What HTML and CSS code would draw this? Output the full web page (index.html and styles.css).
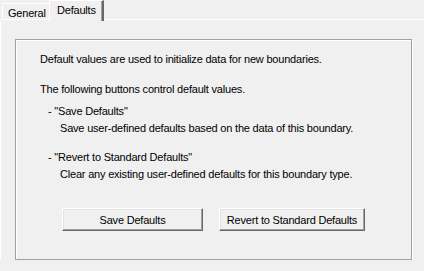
FILE: index.html
```html
<!DOCTYPE html>
<html lang="en">
<head>
    <meta charset="UTF-8">
    <title>Boundary Properties - Defaults</title>
    <link rel="stylesheet" href="styles.css">
</head>
<body>

    <div class="tab-strip">
        <div class="tab">General</div>
        <div class="tab active">Defaults</div>
        <div class="tab-fill"></div>
    </div>

    <div class="tab-page">
        <div class="group">
            <p class="line intro">Default values are used to initialize data for new boundaries.</p>
            <p class="line lead">The following buttons control default values.</p>

            <div class="item">
                <p class="line">- "Save Defaults"</p>
                <p class="line desc">Save user-defined defaults based on the data of this boundary.</p>
            </div>
            <div class="item">
                <p class="line">- "Revert to Standard Defaults"</p>
                <p class="line desc">Clear any existing user-defined defaults for this boundary type.</p>
            </div>

            <div class="buttons">
                <button class="win-btn save">Save Defaults</button>
                <button class="win-btn revert">Revert to Standard Defaults</button>
            </div>
        </div>
    </div>

</body>
</html>
```

FILE: styles.css
```css
/* Classic dialog look */
body {
    margin: 0;
    background-color: #f0f0f0;
    font-family: 'Liberation Sans', Arial, sans-serif;
    font-size: 11px;
    letter-spacing: -0.2px;
    color: #000;
}

/* --- Tabs --- */
.tab-strip {
    display: flex;
    align-items: flex-end;
    height: 20px;
    padding-left: 2px;
}

.tab {
    box-sizing: border-box;
    height: 17px;
    width: 48px;
    padding: 2px 0 0 5px;
    border-top: 1px solid #fff;
    border-left: 1px solid #fff;
    border-right: 1px solid #a0a0a0;
    border-bottom: 1px solid #fff;
    line-height: 14px;
}

.tab.active {
    height: 21px;
    width: 55px;
    margin-left: -1px;
    margin-bottom: -1px;
    padding: 2px 0 0 7px;
    border-bottom: none;
    border-right: 2px solid #696969;
    box-shadow: inset -1px 0 0 #a0a0a0;
    background-color: #f0f0f0;
    position: relative;
}

.tab-fill {
    flex: 1;
    border-bottom: 1px solid #fff;
}

/* --- Page --- */
.tab-page {
    border-left: 1px solid #fff;
    padding: 19px 0 0 14px;
}

.group {
    width: 397px;
    height: 221px;
    box-sizing: border-box;
    border: 1px solid #a0a0a0;
    box-shadow: 1px 1px 0 #fff, inset 1px 1px 0 #fff;
    padding: 10px 0 0 24px;
}

.line {
    margin: 0;
    line-height: 18px;
    white-space: nowrap;
}

.lead {
    margin-top: 12px;
}

.item {
    margin-top: 4px;
    padding-left: 8px;
}

.item + .item {
    margin-top: 11px;
}

.desc {
    padding-left: 12px;
    line-height: 17px;
}

/* --- Buttons --- */
.buttons {
    display: flex;
    gap: 16px;
    margin-top: 25px;
    margin-left: 22px;
}

.win-btn {
    font-family: 'Liberation Sans', Arial, sans-serif;
    font-size: 11px;
    letter-spacing: -0.2px;
    color: #000;
    height: 23px;
    padding: 0;
    background-color: #f0f0f0;
    border: 1px solid;
    border-color: #fff #696969 #696969 #fff;
    box-shadow: inset -1px -1px 0 #a0a0a0, inset 1px 1px 0 #e3e3e3;
}

.save {
    width: 141px;
}

.revert {
    width: 146px;
}
```
